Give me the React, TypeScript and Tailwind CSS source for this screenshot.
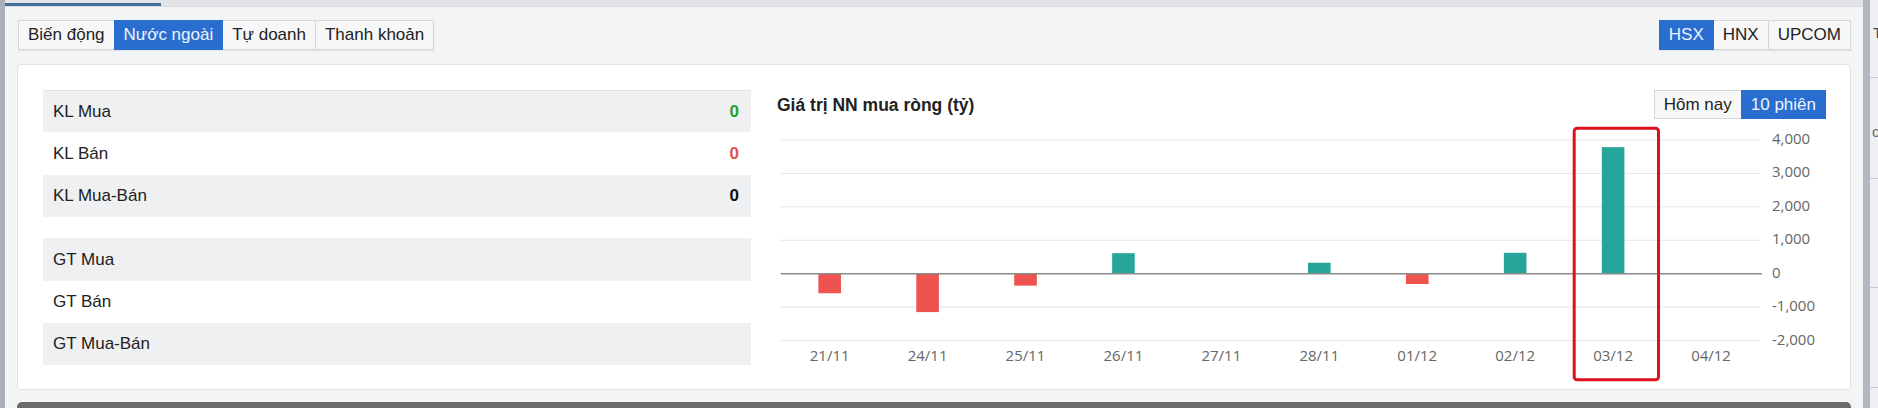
import React from "react";

const days = ["21/11", "24/11", "25/11", "26/11", "27/11", "28/11", "01/12", "02/12", "03/12", "04/12"];
const vals: (number | null)[] = [-586, -1150, -357, 613, 0, 327, -310, 625, 3786, null];
const ticks = [4000, 3000, 2000, 1000, 0, -1000, -2000];

function Chart() {
  const x0 = 4.7;
  const x1 = 984;
  const colW = (x1 - x0) / 10;
  const yTop = 21;
  const per = 33.42;
  const yOf = (v: number) => yTop + ((4000 - v) / 1000) * per;
  const zero = yOf(0);
  const fmt = (n: number) => (n < 0 ? "-" : "") + Math.abs(n).toLocaleString("en-US");
  return (
    <svg width={1050} height={246} className="block overflow-visible" style={{ overflow: "visible" }}>
      {ticks.map((t) =>
        t === 0 ? null : (
          <line key={t} x1={x0} x2={x1} y1={yOf(t)} y2={yOf(t)} stroke="#e6e6e6" strokeWidth={1} />
        )
      )}
      {ticks.map((t) => (
        <text
          key={"l" + t}
          x={996}
          y={yOf(t)}
          dominantBaseline="middle"
          fill="#666"
          fontSize={15}
          fontFamily="'Open Sans', sans-serif"
        >
          {fmt(t)}
        </text>
      ))}
      {vals.map((v, i) => {
        if (v === null || v === 0) return null;
        const cx = x0 + colW * (i + 0.5);
        const y = yOf(v);
        const top = Math.min(y, zero);
        const h = Math.abs(y - zero);
        return (
          <rect key={i} x={cx - 11.3} y={top} width={22.6} height={h} fill={v > 0 ? "#26a69a" : "#ef5350"} />
        );
      })}
      <line x1={x0} x2={x1 + 2} y1={zero} y2={zero} stroke="#8a8a8a" strokeWidth={1.5} />
      {days.map((d, i) => (
        <text
          key={d}
          x={x0 + colW * (i + 0.5)}
          y={237.7}
          textAnchor="middle"
          dominantBaseline="middle"
          fill="#666"
          fontSize={15}
          fontFamily="'Open Sans', sans-serif"
        >
          {d}
        </text>
      ))}
      <rect x={798.2} y={9.2} width={84.3} height={251.5} rx={3} fill="none" stroke="#e0101c" strokeWidth={3} />
    </svg>
  );
}

function Row({ label, value, color, gray, first }: { label: string; value?: string; color?: string; gray?: boolean; first?: boolean }) {
  return (
    <div
      className={
        "flex h-[42.3px] items-center justify-between pl-[10px] pr-[12px] " +
        (gray ? "bg-[#eff0f2] " : "bg-white ") +
        (first ? "border-t border-[#dfe0e3]" : "")
      }
    >
      <span className="text-[17px] text-[#222]">{label}</span>
      {value !== undefined && <span className={"text-[17px] font-bold " + color}>{value}</span>}
    </div>
  );
}

export default function App() {
  const tabs = ["Biến động", "Nước ngoài", "Tự doanh", "Thanh khoản"];
  const exch = ["HSX", "HNX", "UPCOM"];
  return (
    <div
      className="flex h-[408px] w-[1878px] overflow-hidden bg-[#f3f4f6]"
      style={{ fontFamily: "'Liberation Sans', Arial, sans-serif" }}
    >
      <div className="w-[5px] shrink-0 bg-[#aab0b8]" />
      <div className="flex w-[1858px] shrink-0 flex-col">
        <div className="relative h-[7px] shrink-0 border-b border-[#d6d8dc] bg-[#e2e4e8]">
          <div className="absolute bottom-0 left-0 h-[3px] w-[156px] bg-[#41709b]" />
        </div>
        <div className="flex flex-col px-[12px]">
          <div className="mt-[13px] flex h-[30px] items-center justify-between pl-[1px]">
            <div className="flex h-[30px] shadow-[0_1px_1px_rgba(0,0,0,0.06)]">
              {tabs.map((t, i) => (
                <div
                  key={t}
                  className={
                    "flex h-[30px] items-center border px-[9px] text-[17px] " +
                    (i > 0 ? "-ml-px " : "") +
                    (i === 1
                      ? "relative z-10 border-[#2a6dd0] bg-[#2a6dd0] text-[#eef4ff]"
                      : "border-[#d4d6da] bg-[#f7f7f8] text-[#222]")
                  }
                >
                  {t}
                </div>
              ))}
            </div>
            <div className="flex h-[30px] shadow-[0_1px_1px_rgba(0,0,0,0.06)]">
              {exch.map((t, i) => (
                <div
                  key={t}
                  className={
                    "flex h-[30px] items-center border px-[9px] text-[17px] " +
                    (i > 0 ? "-ml-px " : "") +
                    (i === 0
                      ? "relative z-10 border-[#2a6dd0] bg-[#2a6dd0] text-[#eef4ff]"
                      : "border-[#d4d6da] bg-[#f7f7f8] text-[#222]")
                  }
                >
                  {t}
                </div>
              ))}
            </div>
          </div>
          <div className="mt-[14px] flex h-[326px] rounded-[4px] border border-[#e1e3e7] bg-white px-[25px] pt-[25px]">
            <div className="flex w-[708px] shrink-0 flex-col">
              <Row label="KL Mua" value="0" color="text-[#1fa22c]" gray first />
              <Row label="KL Bán" value="0" color="text-[#e0524c]" />
              <Row label="KL Mua-Bán" value="0" color="text-[#111]" gray />
              <div className="h-[21.4px]" />
              <Row label="GT Mua" gray />
              <Row label="GT Bán" />
              <Row label="GT Mua-Bán" gray />
            </div>
            <div className="ml-[25px] flex w-[1050px] flex-col">
              <div className="flex h-[29px] items-center justify-between">
                <span className="pl-[1px] pt-[2px] text-[17.5px] font-bold text-[#222]">Giá trị NN mua ròng (tỷ)</span>
                <div className="flex h-[29px]">
                  <div className="flex h-[29px] items-center border border-[#d4d6da] bg-[#f7f7f8] px-[9px] text-[17px] text-[#222]">
                    Hôm nay
                  </div>
                  <div className="-ml-px flex h-[29px] items-center border border-[#2a6dd0] bg-[#2a6dd0] px-[9px] text-[17px] text-[#eef4ff]">
                    10 phiên
                  </div>
                </div>
              </div>
              <Chart />
            </div>
          </div>
          <div className="mt-[12px] h-[20px] rounded-t-[5px] bg-[#6b6b6b]" />
        </div>
      </div>
      <div className="flex w-[7px] shrink-0 bg-[#b3b7bf]" />
      <div className="relative w-[8px] shrink-0 overflow-hidden bg-[#eef0f3]">
        <div className="absolute left-[3px] top-[22px] text-[15px] text-[#444]">T</div>
        <div className="absolute left-0 top-[77px] h-px w-full bg-[#c9ccd2]" />
        <div className="absolute left-[2px] top-[121px] text-[15px] text-[#666]">c</div>
        <div className="absolute left-0 top-[178px] h-px w-full bg-[#c9ccd2]" />
        <div className="absolute left-0 top-[287px] h-px w-full bg-[#c9ccd2]" />
        <div className="absolute left-0 top-[387px] h-px w-full bg-[#c9ccd2]" />
      </div>
    </div>
  );
}
